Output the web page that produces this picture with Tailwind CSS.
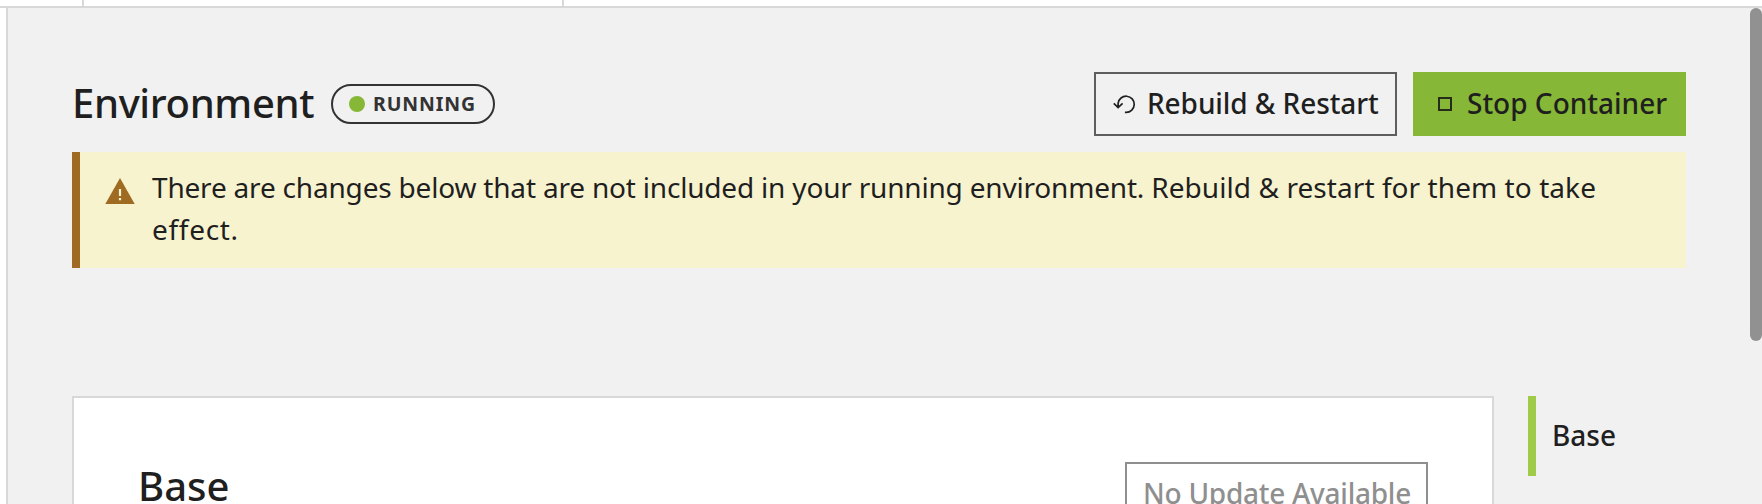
<!DOCTYPE html>
<html lang="en">
<head>
<meta charset="utf-8">
<title>Environment</title>
<script src="https://cdn.jsdelivr.net/npm/@tailwindcss/browser@4"></script>
</head>
<body class="flex h-[504px] w-[1762px] flex-col overflow-hidden bg-white font-['Noto_Sans',sans-serif] text-[28px] text-[#1f1f1f]">
  <div class="flex h-2 shrink-0 border-b-2 border-[#d8d8d8]">
    <div class="w-[84px] border-r-2 border-[#d8d8d8]"></div>
    <div class="w-[480px] border-r-2 border-[#d8d8d8]"></div>
  </div>
  <main class="relative ml-1.5 h-[496px] overflow-hidden border-l-2 border-[#d8d8d8] bg-[#f1f1f1] pt-16 pr-[76px] pl-16">
    <header class="flex h-16 items-center justify-between">
      <div class="flex items-center">
        <h1 class="w-[259px] pb-0.5 text-[40px] leading-12 font-medium tracking-[-0.36px] whitespace-nowrap">Environment</h1>
        <div class="flex h-10 w-[164px] items-center rounded-full border-2 border-[#333] pl-4 text-[#333]">
          <span class="size-4 rounded-full bg-[#86b737]"></span>
          <span class="ml-2 text-[19.5px] leading-6 font-bold tracking-[0.9px]">RUNNING</span>
        </div>
      </div>
      <div class="flex gap-4 font-medium">
        <button class="flex h-16 w-[303px] items-center border-2 border-[#5e5e5e] pl-[17px]">
          <svg class="h-[22px] w-6 shrink-0" viewBox="0 0 24 22" fill="none" stroke="currentColor" stroke-width="1.7"><path d="M5.1 14.5V10.3a8.1 8.1 0 1 1 8.1 9.1h-1.3M.8 10.4l4.3 4.2 4.5-4.2"/></svg>
          <span class="ml-2.5 pb-0.5 tracking-[-0.08px] whitespace-nowrap">Rebuild &amp; Restart</span>
        </button>
        <button class="flex h-16 w-[273px] items-center bg-[#86b737] pl-[25px]">
          <span class="h-[14px] w-[14px] shrink-0 border-2 border-[#252c19]"></span>
          <span class="ml-[15px] pb-0.5 whitespace-nowrap">Stop Container</span>
        </button>
      </div>
    </header>
    <div class="mt-4 flex h-[116px] border-l-8 border-[#9f6a21] bg-[#f8f3cf] pt-[14px] pl-[25px]">
      <svg class="mt-3 h-[26px] w-[30px] shrink-0" viewBox="0 0 30 26"><path d="M15 0l14.7 26H.3z" fill="#9f6a21"/><path d="M13.9 11h2.2v7h-2.2zM13.9 20h2.2v2.2h-2.2z" fill="#f8f3cf"/></svg>
      <p class="ml-[17px] w-[1460px] leading-[42px] tracking-[-0.19px]">There are changes below that are not included in your running environment. <span class="tracking-[0.07px]">Rebuild &amp; restart for them to take</span> <span class="tracking-[0.7px]">effect.</span></p>
    </div>
    <div class="mt-32 flex">
      <section class="flex h-[400px] w-[1422px] justify-between border-2 border-[#d8d8d8] bg-white pt-16 pr-16 pl-16 font-medium">
        <h2 class="pt-[3px] text-[40px] leading-[41px]">Base</h2>
        <button class="h-16 w-[303px] border-2 border-[#8f8f8f] pb-0.5 pl-px tracking-[-0.26px] text-[#8f8f8f]">No Update Available</button>
      </section>
      <nav class="ml-[34px] flex h-20 items-center border-l-8 border-[#9fcb48] pb-0.5 pl-4 font-medium">Base</nav>
    </div>
    <div class="absolute top-0 right-0 h-[333px] w-3 rounded-full bg-[#919191]"></div>
  </main>
</body>
</html>
